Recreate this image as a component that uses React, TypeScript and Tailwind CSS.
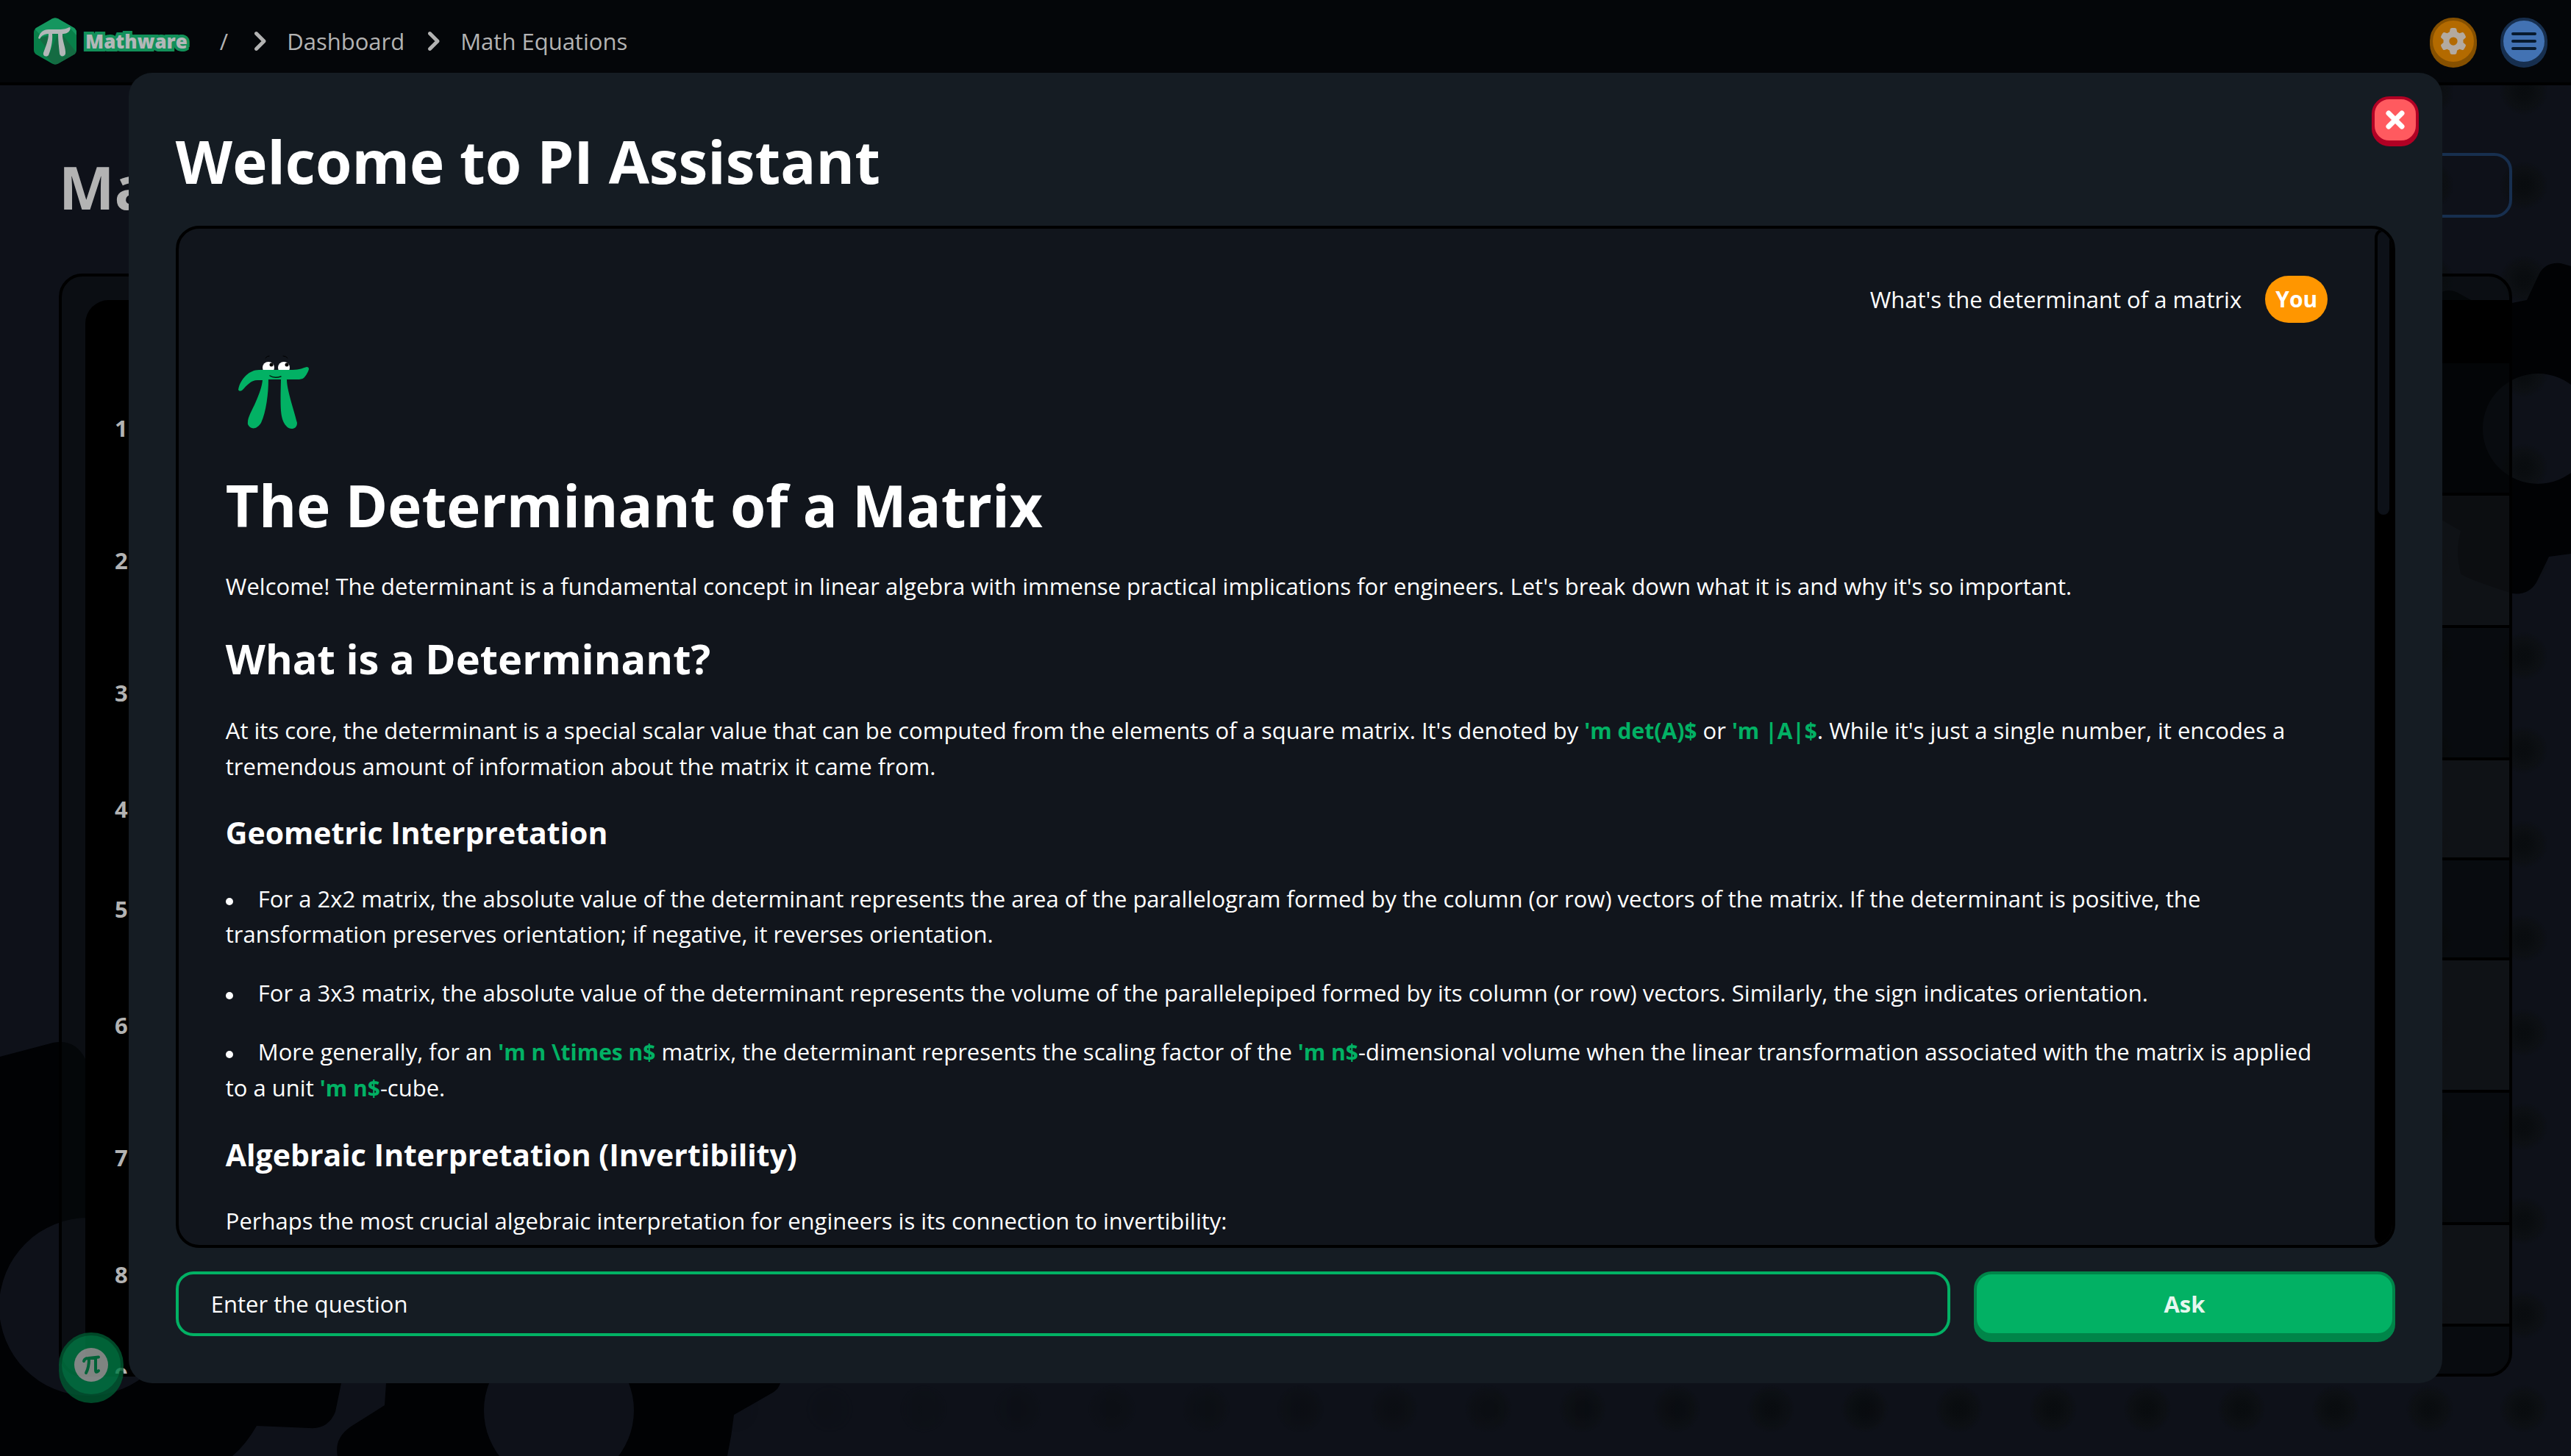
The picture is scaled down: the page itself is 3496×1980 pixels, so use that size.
import type { ReactNode } from 'react';
import { FaChevronRight, FaGear } from 'react-icons/fa6';

const rows = [
  { n: 1, h: 'h-[180px]' },
  { n: 2, h: 'h-[180px]' },
  { n: 3, h: 'h-[180px]' },
  { n: 4, h: 'h-[136px]' },
  { n: 5, h: 'h-[136px]' },
  { n: 6, h: 'h-[180px]' },
  { n: 7, h: 'h-[180px]' },
  { n: 8, h: 'h-[138px]' },
  { n: 9, h: 'h-[136px]' },
];

function Backdrop() {
  return (
    <div aria-hidden="true" className="absolute inset-0 overflow-hidden">
      <div className="absolute inset-0 bg-[radial-gradient(circle,#090c0f_0,#0a0d10_10px,#0d1014_24px,transparent_32px)] bg-[size:128px_128px] bg-[position:40px_60px] [mask-image:linear-gradient(to_right,transparent_28%,black_75%)]" />
      <svg className="absolute bottom-0 left-0" width="1100" height="600" viewBox="0 1380 1100 600" fill="#010204" fillRule="evenodd">
        <path d="M0 1437L72 1418Q102 1412 116 1440L180 1600H440L464 1881L456 1920Q446 1944 421 1942L349 1939Q334 1965 316 1980H0ZM120 1656A121 121 0 1 0 120 1898A121 121 0 1 0 120 1656Z" />
        <path d="M525 1820V1881L523 1911L477 1940Q454 1956 459 1980H989Q995 1952 998 1924L1052 1893Q1059 1888 1061 1881V1820ZM760 1816A102 102 0 1 0 760 2020A102 102 0 1 0 760 1816Z" />
      </svg>
      <svg className="absolute right-0 top-[340px]" width="216" height="500" viewBox="3280 340 216 500" fill="#010204" fillRule="evenodd">
        <path d="M3496 362L3482 358Q3462 356 3453 372L3436 408L3416 412L3360 408L3340 397Q3330 393 3320 397L3290 440V690L3346 722Q3338 750 3346 780Q3350 786 3416 807Q3438 810 3449 792L3466 757L3496 753ZM3451 508A75 75 0 1 0 3451 658A75 75 0 1 0 3451 508Z" />
      </svg>
    </div>
  );
}

function Logo() {
  return (
    <a href="#home" aria-label="Mathware home" className="flex items-center gap-3">
      <svg width="58" height="64" viewBox="0 0 58 64" aria-hidden="true">
        <clipPath id="hex">
          <path d="M25 1.6Q29 -.6 33 1.6L54 13.5Q58 16 58 20V44Q58 48 54 50.500L33 62.400Q29 64.600 25 62.400L4 50.500Q0 48 0 44V20Q0 16 4 13.500Z" />
        </clipPath>
        <g clipPath="url(#hex)">
          <path fill="#087f49" d="M0 0H58V64H0Z" />
          <path fill="#15965f" d="M0 0H58V24L49 14L11 26L0 14Z" />
          <path fill="#146b42" d="M7 28L24 24L14 50L28 64H60V50L38 22L40 46L44 52L36 54L32 24L22 48Z" />
        </g>
        <path fill="#b3b7b8" d="M6 28C8 20 13 16 20 16H34C41 16 45 15 48 13C50 13 50 15 49 17C47 21 43 22 39 22C38 30 44 42 43 49C42 53 36 54 35 49C34 40 33 30 33 22H25C26 32 23 44 20 51C18 54 12 53 13 48C16 39 20 31 20 22C14 22 11 24 8 29Z" />
      </svg>
      <span className="text-[26px] leading-8 font-extrabold text-[#b3b7b8] [-webkit-text-stroke:8px_#12905a] [paint-order:stroke_fill]">Mathware</span>
    </a>
  );
}

function Chevron() {
  return <FaChevronRight aria-hidden="true" className="mx-6 size-7" stroke="currentColor" strokeWidth="28" />;
}

function Navbar() {
  return (
    <header className="relative flex h-[116px] items-center justify-between border-b-4 border-black bg-[#040609] pr-8 pl-[46px]">
      <nav aria-label="Breadcrumb" className="flex items-center text-[31px] leading-12 text-[#b3b3b3]">
        <Logo />
        <span className="mr-1 ml-11">/</span>
        <Chevron />
        <a href="#dashboard">Dashboard</a>
        <Chevron />
        <a href="#equations">Math Equations</a>
      </nav>
      <div className="flex gap-8">
        <button aria-label="Settings" className="grid size-16 place-items-center rounded-full border-4 border-[#865000] bg-[#b36a00] text-[#b3aaa0] shadow-[0_4px_0_#865000]">
          <FaGear className="size-9" />
        </button>
        <button aria-label="Menu" className="grid size-16 place-items-center rounded-full border-4 border-[#172f4f] bg-[#4272b3] shadow-[0_4px_0_#172f4f]">
          <svg width="36" height="28" viewBox="0 0 36 28" stroke="#081a2e" strokeWidth="4" strokeLinecap="round" aria-hidden="true">
            <path d="M3 4H33M3 14H33M3 24H33" />
          </svg>
        </button>
      </div>
    </header>
  );
}

function PiMascot() {
  return (
    <svg className="mt-7 block size-32" viewBox="307 467 128 128" aria-label="PI" role="img">
      <g fill="#fff">
        <circle cx="365" cy="500" r="8" />
        <circle cx="386" cy="500" r="8" />
      </g>
      <g fill="#000">
        <circle cx="369" cy="496" r="2.500" />
        <circle cx="390" cy="496" r="2.500" />
      </g>
      <path d="M361 487Q363 484 366 484M385 484Q389 484 391 487" fill="none" stroke="#000" strokeLinecap="round" />
      <path fill="#02b164" d="M324 530C326 517 338 503 352 503H398C407 503 413 500 417 499Q420 499 420 502C419 506 416 511 413 514Q410 516 404 516H390C390 530 399 555 404 575C404 585 393 585 389 579C381 569 381 557 382 516H365C365 535 362 560 355 575C349 585 340 584 337 577C336 568 342 560 348 546C353 534 356 526 357 517H350C341 517 336 524 329 531Q325 533 324 530Z" />
      <path fill="none" stroke="#03190f" strokeWidth="1.500" strokeLinecap="round" d="M367 511Q373 515 382 512" />
    </svg>
  );
}

function Tex({ children }: { children: ReactNode }) {
  return <strong className="text-[30px] font-bold text-[#02b164]">{children}</strong>;
}

function Item({ children }: { children: ReactNode }) {
  return (
    <li>
      <span aria-hidden="true" className="mr-[34px] inline-block size-2.5 rounded-full bg-white align-middle" />
      {children}
    </li>
  );
}

function Answer() {
  return (
    <article>
      <PiMascot />
      <h2 className="mt-9 mb-[30px] text-[78px] leading-[112px] font-bold">The Determinant of a Matrix</h2>
      <p>Welcome! The determinant is a fundamental concept in linear algebra with immense practical implications for engineers. Let's break down what it is and why it's so important.</p>
      <h3 className="my-8 text-[56px] leading-[84px] font-bold">What is a Determinant?</h3>
      <p>
        At its core, the determinant is a special scalar value that can be computed from the elements of a square matrix. It's denoted by <Tex>'m det(A)$</Tex> or <Tex>'m |A|$</Tex>. While it's just a single number, it encodes a tremendous amount of information about the matrix it came from.
      </p>
      <h4 className="my-9 text-[41px] leading-[60px] font-bold">Geometric Interpretation</h4>
      <ul className="flex flex-col gap-8">
        <Item>For a 2x2 matrix, the absolute value of the determinant represents the area of the parallelogram formed by the column (or row) vectors of the matrix. If the determinant is positive, the transformation preserves orientation; if negative, it reverses orientation.</Item>
        <Item>For a 3x3 matrix, the absolute value of the determinant represents the volume of the parallelepiped formed by its column (or row) vectors. Similarly, the sign indicates orientation.</Item>
        <Item>
          More generally, for an <Tex>'m n \times n$</Tex> matrix, the determinant represents the scaling factor of the <Tex>'m n$</Tex>-dimensional volume when the linear transformation associated with the matrix is applied to a unit <Tex>'m n$</Tex>-cube.
        </Item>
      </ul>
      <h4 className="my-9 text-[41px] leading-[60px] font-bold">Algebraic Interpretation (Invertibility)</h4>
      <p>Perhaps the most crucial algebraic interpretation for engineers is its connection to invertibility:</p>
    </article>
  );
}

function AssistantDialog() {
  return (
    <div className="absolute inset-0 flex items-center justify-center">
      <section role="dialog" aria-labelledby="assistant-title" className="relative flex h-[90%] w-[90%] flex-col gap-8 rounded-[32px] bg-[#151c23] p-16 text-white">
        <button aria-label="Close" className="absolute top-8 right-8 grid size-16 place-items-center rounded-3xl border-4 border-[#b10024] bg-[#ff5a5f] shadow-[0_4px_0_#b10024]">
          <svg width="28" height="28" viewBox="0 0 28 28" stroke="#fff" strokeWidth="7" strokeLinecap="round" aria-hidden="true">
            <path d="M5 5L23 23M23 5L5 23" />
          </svg>
        </button>
        <h1 id="assistant-title" className="text-[80px] leading-[112px] font-bold">Welcome to PI Assistant</h1>
        <div className="flex min-h-0 flex-1 overflow-hidden rounded-[32px] border-4 border-black bg-[#11151c]">
          <div className="min-w-0 flex-1 overflow-hidden p-16 pb-0 text-[31px] leading-12">
            <div className="flex items-center justify-end gap-8">
              <p>What's the determinant of a matrix</p>
              <span className="rounded-full bg-[#ff9600] px-3.5 py-2 text-[30px] font-bold">You</span>
            </div>
            <Answer />
          </div>
          <div aria-hidden="true" className="w-6 rounded-full bg-black p-1">
            <div className="h-[28%] rounded-full bg-[#0d1118]" />
          </div>
        </div>
        <form className="flex gap-8" onSubmit={(e) => e.preventDefault()}>
          <input aria-label="Question" placeholder="Enter the question" className="h-[88px] min-w-0 flex-1 rounded-3xl border-4 border-[#02b164] bg-transparent px-11 text-[31px] placeholder:text-white placeholder:opacity-100" />
          <button className="h-[88px] w-[19%] rounded-3xl border-4 border-[#008549] bg-[#02b164] text-[31px] font-bold text-[#e6f7ef] shadow-[0_8px_0_#008549]">Ask</button>
        </form>
      </section>
    </div>
  );
}

function EquationsPage() {
  return (
    <main className="relative flex min-h-0 flex-1 flex-col px-20 pt-[92px] pb-27">
      <div className="mb-[68px] flex items-start justify-between">
        <h1 className="h-24 text-[80px] leading-[92px] font-bold text-[#b3b3b3]">Math Equations</h1>
        <input aria-label="Search equations" className="h-[88px] w-[600px] rounded-3xl border-4 border-[#172f4f] bg-transparent px-11 text-[31px]" />
      </div>
      <div className="min-h-0 flex-1 overflow-hidden rounded-[32px] border-4 border-black bg-[#080c0d]/50 pt-8 pl-8">
        <table className="w-full border-separate border-spacing-0 text-left text-[31px] text-[#b3b3b3]">
          <thead>
            <tr className="h-[86px]">
              <th aria-label="Number" className="w-24 rounded-tl-[32px] bg-black" />
              <th aria-label="Equation" className="bg-black" />
            </tr>
          </thead>
          <tbody>
            {rows.map((r) => (
              <tr key={r.n} className="odd:bg-black/20 even:bg-[#14161a]/50">
                <th scope="row" className={`${r.h} border-b-4 border-black bg-black px-10 font-bold`}>{r.n}</th>
                <td className="border-b-4 border-black" />
              </tr>
            ))}
          </tbody>
        </table>
      </div>
    </main>
  );
}

export default function App() {
  return (
    <div className="relative flex h-screen flex-col overflow-hidden bg-[#0e1119] font-['Open_Sans',sans-serif]">
      <Backdrop />
      <Navbar />
      <EquationsPage />
      <button aria-label="Open PI Assistant" className="absolute bottom-20 left-20 grid size-[88px] place-items-center rounded-full border-4 border-[#005a32] bg-[#007b45] opacity-80 shadow-[0_8px_0_#005a32]">
        <svg width="46" height="46" viewBox="0 0 46 46" aria-hidden="true">
          <circle cx="23" cy="23" r="23" fill="#9fa5a2" />
          <path d="M13 18Q14 14 19 14L33 12.500M20 15Q20 27 16 34M29 14V30Q29 35 33 31" fill="none" stroke="#007b45" strokeWidth="4" strokeLinecap="round" />
        </svg>
      </button>
      <AssistantDialog />
    </div>
  );
}
